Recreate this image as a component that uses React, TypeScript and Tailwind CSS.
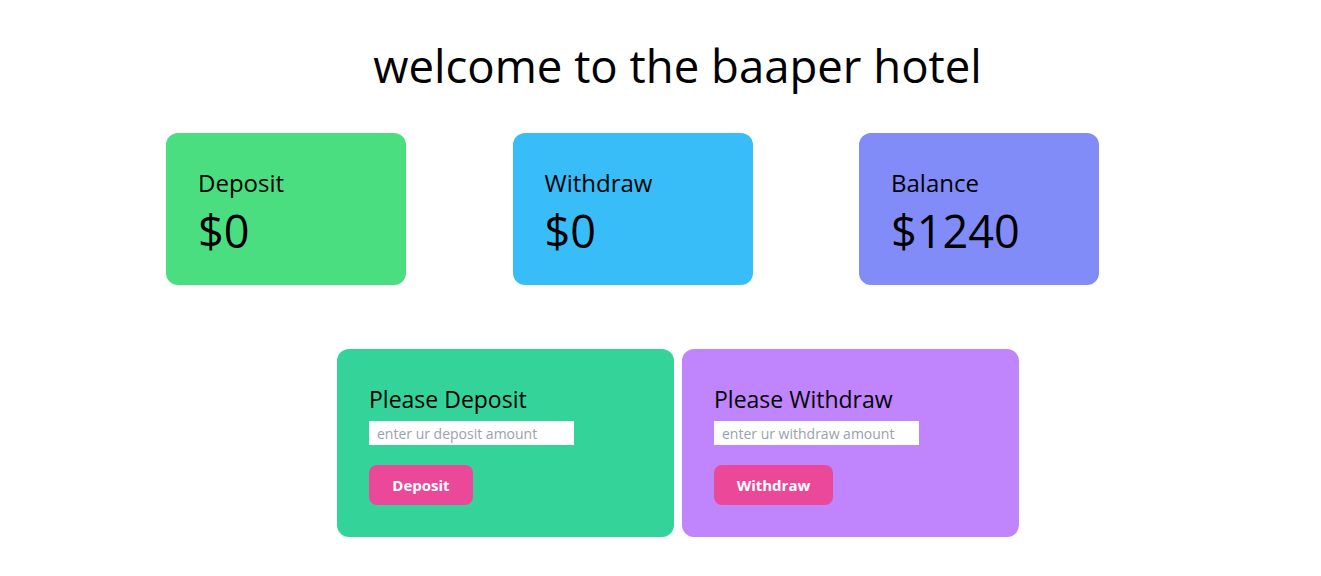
import React, { useState } from 'react';

const StatCard: React.FC<{ label: string; value: number; color: string }> = ({ label, value, color }) => (
  <div className={`w-[240px] h-[152px] rounded-xl px-8 pt-[34px] ${color}`}>
    <p className="text-[24px] leading-[32px]">{label}</p>
    <p className="text-[45px] leading-[56px] mt-[4px]">${value}</p>
  </div>
);

const ActionCard: React.FC<{
  title: string;
  placeholder: string;
  button: string;
  color: string;
  btnWidth: string;
}> = ({ title, placeholder, button, color, btnWidth }) => (
  <div className={`w-[337px] h-[188px] rounded-xl px-8 pt-[34px] ${color}`}>
    <p className="text-[23px] leading-[32px] mb-[6px]">{title}</p>
    <input
      type="text"
      placeholder={placeholder}
      className="block w-[205px] h-[24px] bg-white px-2 text-[14px] placeholder:text-gray-400 outline-none"
    />
    <button className={`mt-[20px] h-[40px] ${btnWidth} rounded-lg bg-[#ec4899] text-white font-bold text-[15px]`}>
      {button}
    </button>
  </div>
);

export default function App() {
  const [deposit] = useState(0);
  const [withdraw] = useState(0);
  const [balance] = useState(1240);

  return (
    <div className="min-h-screen bg-white text-black font-['Open_Sans',sans-serif]">
      <h1 className="pt-[33px] text-center text-[45.5px] leading-[64px] pl-[34px]">welcome to the baaper hotel</h1>

      <div className="flex gap-[106.5px] pl-[166px] mt-[36px]">
        <StatCard label="Deposit" value={deposit} color="bg-[#4ade80]" />
        <StatCard label="Withdraw" value={withdraw} color="bg-[#38bdf8]" />
        <StatCard label="Balance" value={balance} color="bg-[#818cf8]" />
      </div>

      <div className="flex gap-[8px] pl-[337px] mt-[64px]">
        <ActionCard
          title="Please Deposit"
          placeholder="enter ur deposit amount"
          button="Deposit"
          color="bg-[#34d399]"
          btnWidth="w-[104px]"
        />
        <ActionCard
          title="Please Withdraw"
          placeholder="enter ur withdraw amount"
          button="Withdraw"
          color="bg-[#c084fc]"
          btnWidth="w-[119px]"
        />
      </div>
    </div>
  );
}
